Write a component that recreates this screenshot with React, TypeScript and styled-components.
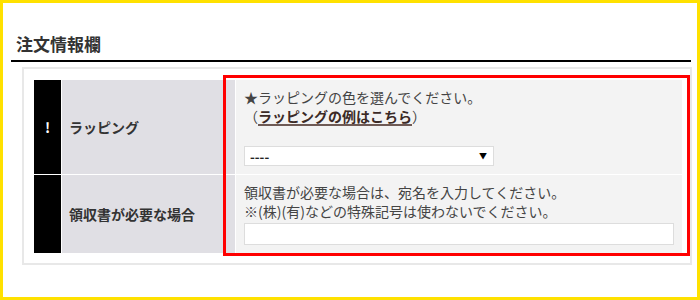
import React from "react";
import styled, { createGlobalStyle } from "styled-components";

const GlobalStyle = createGlobalStyle`
  html, body {
    margin: 0;
    padding: 0;
    background: #fff;
  }
  body {
    font-family: "Noto Sans CJK JP", "Noto Sans", sans-serif;
    color: #333;
  }
`;

const Frame = styled.div`
  width: 700px;
  height: 300px;
  box-sizing: border-box;
  border: 3px solid #ffe100;
  padding: 29px 6px 0 8px;
`;

const Heading = styled.h2`
  margin: 0;
  padding: 0 0 4px 5px;
  font-size: 17px;
  line-height: 24px;
  font-weight: bold;
  color: #333;
  border-bottom: 2px solid #000;
`;

const Card = styled.div`
  position: relative;
  margin: 5px -1px 0 11px;
  border: 2px solid #e8e8e8;
  padding: 11px 8px 10px 10px;
`;

const FormGrid = styled.div`
  display: grid;
  grid-template-columns: 27px 173px 1fr;
  gap: 1px;
  background: #fff;
`;

const Mark = styled.div`
  background: #000;
  color: #fff;
  display: flex;
  align-items: center;
  justify-content: center;
  font-size: 14px;
  font-weight: bold;
`;

const Label = styled.div`
  background: #e0dfe4;
  display: flex;
  align-items: center;
  padding-left: 7px;
  font-size: 14px;
  font-weight: bold;
  color: #333;
`;

const Field = styled.div`
  background: #f3f3f3;
  padding: 8px;
  font-size: 14px;
  line-height: 19px;
  color: #444;
`;

const Line = styled.div`
  white-space: nowrap;
`;

const Link = styled.a`
  color: #3b2a26;
  font-weight: bold;
  text-decoration: underline;
  text-decoration-color: #6e5a55;
  text-decoration-thickness: 2px;
  text-underline-offset: 2px;
`;

const SelectWrap = styled.div<{ $width: number }>`
  position: relative;
  width: ${(p) => p.$width}px;
  height: 20px;
  margin-top: 20px;

  &::after {
    content: "▼";
    position: absolute;
    right: 7px;
    top: 0;
    line-height: 20px;
    font-size: 8px;
    color: #000;
    pointer-events: none;
  }
`;

const Select = styled.select`
  appearance: none;
  display: block;
  width: 100%;
  height: 20px;
  box-sizing: border-box;
  margin: 0;
  padding: 0 0 0 5px;
  border: 1px solid #ddd;
  border-radius: 0;
  background: #fff;
  font-family: "Noto Sans CJK JP", "Noto Sans", sans-serif;
  font-size: 13px;
  font-weight: bold;
  color: #222;
  outline: none;
`;

const TextInput = styled.input`
  display: block;
  width: 100%;
  height: 22px;
  box-sizing: border-box;
  margin: 2px 0 0;
  padding: 0 6px;
  border: 1px solid #ddd;
  background: #fff;
  outline: none;
`;

const Highlight = styled.div`
  position: absolute;
  left: 199px;
  top: 6px;
  width: 467px;
  height: 181px;
  box-sizing: border-box;
  border: 3px solid #ff0000;
  pointer-events: none;
`;

export default function App() {
  return (
    <>
      <GlobalStyle />
      <Frame>
        <Heading>注文情報欄</Heading>
        <Card>
          <FormGrid>
            <Mark>!</Mark>
            <Label>ラッピング</Label>
            <Field>
              <Line>★ラッピングの色を選んでください。</Line>
              <Line>
                （<Link href="#">ラッピングの例はこちら</Link>）
              </Line>
              <SelectWrap $width={250}>
                <Select defaultValue="">
                  <option value="">----</option>
                </Select>
              </SelectWrap>
            </Field>

            <Mark />
            <Label>領収書が必要な場合</Label>
            <Field>
              <Line>領収書が必要な場合は、宛名を入力してください。</Line>
              <Line>※(株)(有)などの特殊記号は使わないでください。</Line>
              <TextInput type="text" />
            </Field>
          </FormGrid>
          <Highlight />
        </Card>
      </Frame>
    </>
  );
}
